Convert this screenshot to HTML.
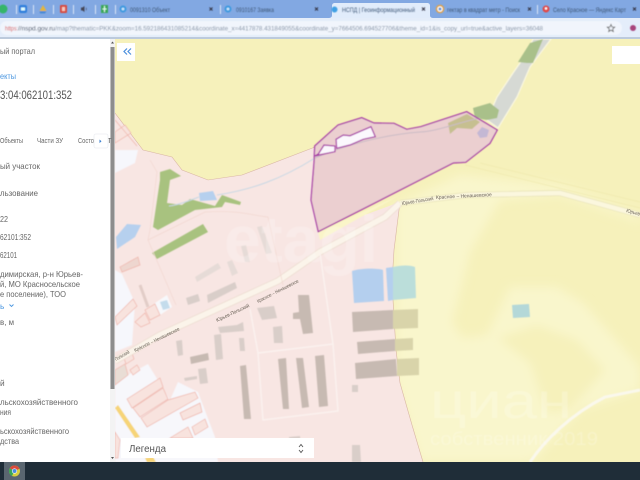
<!DOCTYPE html>
<html><head><meta charset="utf-8"><style>
html,body{margin:0;padding:0;width:640px;height:480px;overflow:hidden;background:#fff}
svg{display:block;position:absolute;left:0;top:0}
text{font-family:"Liberation Sans",sans-serif}
.s{font-size:8.3px;fill:#666}
.p{fill:#f8e3de;stroke:#efb5ab;stroke-width:.7}
.rd{font-size:5px;fill:#6a6258}
.t{font-size:6.5px;fill:#3f5878}
</style></head><body>
<svg width="640" height="480" viewBox="0 0 640 480" xmlns="http://www.w3.org/2000/svg">
<defs>
<filter id="bl" x="-5%" y="-5%" width="110%" height="110%"><feGaussianBlur stdDeviation="0.3"/></filter>
<filter id="bl2" x="-5%" y="-5%" width="110%" height="110%"><feGaussianBlur stdDeviation="0.45"/></filter>
<filter id="bl5" x="-10%" y="-10%" width="120%" height="120%"><feGaussianBlur stdDeviation="5"/></filter>
<clipPath id="mc"><rect x="115" y="39" width="525" height="423"/></clipPath>
</defs>

<!-- MAP -->
<g clip-path="url(#mc)">
<rect x="115" y="39" width="525" height="423" fill="#f6f1bb"/>
<!-- lighter yellow areas -->
<g filter="url(#bl5)" fill="#f9f6cc">
<path d="M396 205L460 175L560 185L640 215L640 222L560 195L500 200L470 252L452 323L463 338L487 335L510 287L557 287L583 303L640 367L640 390L580 410L537 457L530 462L420 462L396 380Z"/>
<path d="M498 338L537 325L577 340L605 370L570 410L547 413L530 363Z" fill="#f6f1bb"/>
</g>
<!-- pink zone -->
<path d="M115 113L143 150L172 157L182 170L208 180L242 175L315 147L312 200L318 232L400 202L394 250L392 283L396 350L400 383L412 425L423 462L115 462Z" fill="#f8e6e3"/>
<path d="M115 113L143 150L172 157L182 170L208 180L242 175L315 147M400 202L394 250L392 283L396 350L400 383L412 425L423 462" fill="none" stroke="#d9b6a4" stroke-width=".6"/>
<g filter="url(#bl2)">
<!-- white gaps -->
<path d="M115 150L138 150L135 163L115 173Z" fill="#f6f7fc"/>
<path d="M115 270L122 274L135 303L132 345L115 352Z" fill="#f6f7fc"/>
<path d="M155 303L167 295L172 307L160 315Z" fill="#f7f8fb"/>
<path d="M115 382L148 364L170 400L178 382L198 392L215 437L218 462L115 462Z" fill="#f7f7fb"/>
<!-- water -->
<path d="M116 237L127 224L141 225L135 237L117 249Z" fill="#b6d0ee"/>
<path d="M199 193L213 191L217 200L200 201Z" fill="#b6d0ee"/>
<path d="M160 302L167 300L170 308L163 310Z" fill="#c4dcec"/>
<path d="M352 271C360 268 378 268 383 270L384 301L354 303Z" fill="#b4cfee"/>
<path d="M386 268L393 267L393 300L388 301Z" fill="#b4cfee"/>
<path d="M393 267C402 265 410 265 415 267L416 298L393 300Z" fill="#bbdeda"/>
<path d="M512 305L529 304L530 317L513 318Z" fill="#b4d8d8"/>
<!-- yellow road -->
<path d="M115 408L118 405L140 437L135 438Z" fill="#f6d477"/>
<path d="M145 458L153 457L156 462L147 462Z" fill="#f6d477"/>
<!-- buildings -->
<g fill="#c7bab2">
<path d="M298 295L309 295L313 333L303 334L300 319L293 319L293 313L299 312Z"/>
<path d="M278 359L286 358L289 409L283 409Z"/>
<path d="M296 358L303 358L309 407L302 408Z"/>
<path d="M315 356L324 355L328 406L319 407Z"/>
<path d="M240 366L246 365L251 419L244 419Z"/>
<path d="M190 357L208 353L209 360L191 364Z"/>
<path d="M352 312L393 310L393 329L353 332Z"/>
<path d="M357 342L395 339L395 351L358 354Z"/>
<path d="M355 363L396 359L397 376L356 379Z"/>
</g>
<g fill="#d9cec9">
<path d="M257 308L274 306L277 318L262 320Z"/>
<path d="M273 327L282 326L283 343L274 343Z"/>
<path d="M214 335L221 334L223 359L216 360Z"/>
<path d="M239 338L244 338L245 351L240 351Z"/>
<path d="M176 341L182 340L183 355L178 356Z"/>
<path d="M198 369L206 368L208 383L200 384Z"/>
<path d="M184 378L197 376L197 379L185 381Z"/>
<path d="M218 327L237 325L243 322L244 331L220 333Z"/>
<path d="M186 298L198 294L200 301L188 305Z"/>
<path d="M207 295L235 282L237 288L208 303Z"/>
<path d="M289 437L300 436L301 447L290 447Z"/>
<path d="M352 445L360 445L361 462L352 462Z"/>
<path d="M352 385L358 385L358 392L352 392Z"/>
</g>
<g fill="#e6dbd7">
<path d="M195 277L218 263L221 268L197 282Z"/>
<path d="M227 262L232 260L238 273L232 276Z"/>
<path d="M257 227L262 226L272 253L266 254Z"/>
<path d="M241 246L246 245L250 262L245 262Z"/>
</g>
<g fill="#d9d4aa">
<path d="M393 310L418 309L418 328L393 329Z"/>
<path d="M395 339L413 338L413 350L395 351Z"/>
<path d="M397 359L419 358L419 375L397 376Z"/>
</g>
<!-- river bed -->
<path d="M533 39L551 39L530 67L517 97L498 128L487 120L497 97L513 73L527 53Z" fill="#d6d9d4" stroke="#faf7e0" stroke-width="1.2"/>
<!-- plots -->
<g class="p">
<path d="M115 132L125 125L131 133L115 143Z"/>
<path d="M115 120L137 146" fill="none"/>
<path d="M120 267L138 257L140 265L122 272Z" fill="#eed6cf"/>
<path d="M115 317L133 299L137 306L117 325Z"/>
<path d="M135 322L145 313L150 323L141 327Z"/>
<path d="M145 310L155 304L160 315L150 320Z"/>
<path d="M127 399L160 378L163 387L132 408Z"/>
<path d="M133 408L163 388L168 399L140 417Z"/>
<path d="M141 418L168 400L195 392L198 398L147 427Z"/>
<path d="M180 413L200 403L202 412L183 420Z"/>
<path d="M192 427L205 419L208 427L195 435Z"/>
<path d="M170 438L188 427L193 438Z"/>
<path d="M115 432L120 440L118 458L115 458Z"/>
<path d="M124 358L132 353L134 359L126 364Z"/>
<path d="M130 370L137 365L140 370L133 375Z"/>
<path d="M115 370L125 364L128 375L115 385Z" fill="#e9ddd5"/>
</g>
<path d="M140 285L148 307" stroke="#d4bdb6" stroke-width="3" fill="none" opacity=".6"/>
<!-- green -->
<path d="M160 172L170 169L181 176L170 180L167 203L182 205L190 199L215 206L222 195L241 202L240 205L225 202L222 207L195 210L158 230L153 227L160 180Z" fill="#a8c27f"/>
<path d="M152 253L203 224L208 232L157 259Z" fill="#a8c27f"/>
<path d="M473 108L490 103L499 110L497 118L487 120L475 118Z" fill="#a9c08a"/>
<path d="M518 62L530 43L543 39L533 63L527 63Z" fill="#a9c08a"/>
<!-- streams -->
<path d="M169 206C180 205 190 200 199 197M217 195C250 190 280 180 315 158" fill="none" stroke="#c8d8e4" stroke-width="1"/>
<!-- road -->
<path d="M115 361L160 335L278 281L320 252L385 217L400 203" fill="none" stroke="#ecdcd0" stroke-width="7"/>
<path d="M115 361L160 335L278 281L320 252L385 217L400 203" fill="none" stroke="#fbf4ea" stroke-width="5.5"/>
<path d="M400 203L467 195L560 193L640 215" fill="none" stroke="#e8e3b8" stroke-width="6"/>
<path d="M400 203L467 195L560 193L640 215" fill="none" stroke="#fbf7de" stroke-width="4.6"/>
<path d="M465 165L640 208M480 163L640 202" fill="none" stroke="#efe9ae" stroke-width=".7"/>
<path d="M318 232L400 195L320 240Z" fill="#faf5c8"/>
<path d="M530 462C545 440 570 415 605 397L640 390" fill="none" stroke="#faf8ec" stroke-width="3"/>
<!-- block lines -->
<g fill="none" stroke="#fbf2ef" stroke-width="1.4">
<path d="M258 353L333 344L338 411L263 420Z"/>
<path d="M250 309L258 353M320 253L333 344"/>
</g>
<g fill="none" stroke="#f2d8d1" stroke-width=".7">
<path d="M150 160L157 172L150 230L148 240L176 305M148 240L205 212C240 210 250 215 268 217L283 285"/>
</g>
<!-- parcel -->
<path d="M314.7 146L338 125L361.7 117.7L374 123L394 123.3L406.7 129.3L420.7 126.7L466.7 111.7L497.3 130L490 143.3L465.7 162.3L453.3 163L318.3 231.7L311 200L314 163.3Z" fill="#ebcfd0"/>
<path d="M448 123L467 114L480 122L472 129L457 128L450 134Z" fill="#c6bf90"/>
<path d="M477 133L482 127L489 130L487 137L480 138Z" fill="#c4b8d4"/>
<path d="M315 158C340 147 380 135 420 132C435 132 460 122 480 118" fill="none" stroke="#cbbcc6" stroke-width="1"/>
<path d="M318.3 154L324 145L335 146L335 151.7Z" fill="#fbf8fd"/>
<path d="M336 139.3L343.3 135L350 135.7L371 126.7L375.3 136.7L363.3 139.3L350 145L336.7 148.3Z" fill="#fbf8fd"/>
<g fill="none" stroke="#a52fa5" stroke-width="1.2">
<path d="M314.7 146L338 125L361.7 117.700L374 123L394 123.3L406.7 129.3L420.7 126.7L466.7 111.7L497.3 130L490 143.3L465.7 162.3L453.3 163L318.3 231.7L311 200L314 163.3Z"/>
<path d="M318.3 154L324 145L335 146L335 151.7L314.7 156Z"/>
<path d="M336 139.3L343.3 135L350 135.7L371 126.7L375.3 136.7L363.3 139.3L350 145L336.7 148.3Z"/>
</g>
<!-- watermarks -->
<text x="224" y="262" font-size="66" font-weight="bold" fill="#fff" opacity=".2">etagi</text>
<g fill="#fff" opacity=".2">
<text x="430" y="418" font-size="50" textLength="142" lengthAdjust="spacingAndGlyphs">циан</text>
<text x="430" y="445" font-size="18" textLength="168" lengthAdjust="spacingAndGlyphs">собственник 2019</text>
</g>
</g>
<!-- road labels -->
<g class="rd" filter="url(#bl)">
<text transform="translate(402,205) rotate(-9)" textLength="32" lengthAdjust="spacingAndGlyphs">Юрьев-Польский</text>
<text transform="translate(436,199) rotate(-3)" textLength="56" lengthAdjust="spacingAndGlyphs">Красное – Ненашевское</text>
<text transform="translate(626,212) rotate(15)" textLength="14" lengthAdjust="spacingAndGlyphs">Юрьев</text>
<text transform="translate(217,322) rotate(-25)" textLength="36" lengthAdjust="spacingAndGlyphs">Юрьев-Польский</text>
<text transform="translate(258,303) rotate(-27)" textLength="46" lengthAdjust="spacingAndGlyphs">Красное – Ненашевское</text>
<text transform="translate(116,361) rotate(-30)" textLength="16" lengthAdjust="spacingAndGlyphs">Польский</text>
<text transform="translate(135,352) rotate(-26)" textLength="50" lengthAdjust="spacingAndGlyphs">Красное – Ненашевское</text>
</g>
</g>

<!-- SIDEBAR -->
<rect x="0" y="39" width="115" height="423" fill="#fff"/>
<rect x="110" y="39" width="5" height="423" fill="#f3f3f3"/>
<rect x="110.500" y="47" width="4" height="342" fill="#8d8d8d"/>
<path d="M112.500 41.500l-1.500 2h3zM112.500 459l-1.500-2h3z" fill="#555"/>
<g filter="url(#bl)">
<text class="s" x="0" y="54" textLength="35" lengthAdjust="spacingAndGlyphs">ый портал</text>
<text x="0" y="79" font-size="8.300" fill="#4a96e0" textLength="16" lengthAdjust="spacingAndGlyphs">екты</text>
<text x="0" y="99" font-size="12" fill="#555" textLength="72" lengthAdjust="spacingAndGlyphs">3:04:062101:352</text>
<text class="s" x="0" y="143" style="font-size:7.500px" textLength="23" lengthAdjust="spacingAndGlyphs">Объекты</text>
<text class="s" x="37" y="143" style="font-size:7.500px" textLength="26" lengthAdjust="spacingAndGlyphs">Части ЗУ</text>
<text class="s" x="78" y="143" style="font-size:7.500px" textLength="16" lengthAdjust="spacingAndGlyphs">Состо</text>
<text class="s" x="107" y="143" style="font-size:7.500px">Т</text>
<text class="s" x="0" y="169" textLength="40" lengthAdjust="spacingAndGlyphs">ый участок</text>
<text class="s" x="0" y="196" textLength="38" lengthAdjust="spacingAndGlyphs">льзование</text>
<text class="s" x="0" y="222" textLength="8" lengthAdjust="spacingAndGlyphs">22</text>
<text class="s" x="0" y="240" textLength="31" lengthAdjust="spacingAndGlyphs">62101:352</text>
<text class="s" x="0" y="258" textLength="17" lengthAdjust="spacingAndGlyphs">62101</text>
<text class="s" x="0" y="277" textLength="83" lengthAdjust="spacingAndGlyphs">димирская, р-н Юрьев-</text>
<text class="s" x="0" y="287" textLength="80" lengthAdjust="spacingAndGlyphs">й, МО Красносельское</text>
<text class="s" x="0" y="297" textLength="66" lengthAdjust="spacingAndGlyphs">е поселение), ТОО</text>
<text x="0" y="309" font-size="8.300" fill="#4a96e0">ь</text>
<path d="M9.500 304.500l2 2 2-2" fill="none" stroke="#4a96e0" stroke-width=".9"/>
<text class="s" x="0" y="325" textLength="14" lengthAdjust="spacingAndGlyphs">в, м</text>
<text class="s" x="0" y="386">й</text>
<text class="s" x="0" y="405" textLength="78" lengthAdjust="spacingAndGlyphs">льскохозяйственного</text>
<text class="s" x="0" y="415" textLength="11" lengthAdjust="spacingAndGlyphs">ния</text>
<text class="s" x="0" y="434" textLength="69" lengthAdjust="spacingAndGlyphs">ьскохозяйственного</text>
<text class="s" x="0" y="444" textLength="19" lengthAdjust="spacingAndGlyphs">дства</text>
</g>
<rect x="94" y="134" width="14" height="14" rx="2" fill="#fff" stroke="#eceef2" stroke-width=".8"/>
<path d="M99.500 139.500l2 1.800-2 1.800z" fill="#3a7fd0"/>

<!-- buttons on map -->
<rect x="117" y="43" width="18" height="18" fill="#fff"/>
<path d="M127 48.500l-3 3 3 3M131 48.500l-3 3 3 3" fill="none" stroke="#4a8edc" stroke-width="1.200"/>
<rect x="612" y="46" width="28" height="18" fill="#fff"/>
<rect x="121" y="438" width="193" height="20" fill="#fff"/>
<text x="129" y="452" font-size="10" fill="#555" textLength="37" lengthAdjust="spacingAndGlyphs" filter="url(#bl)">Легенда</text>
<path d="M299 447l2-2.500 2 2.500M299 450l2 2.500 2-2.500" fill="none" stroke="#555" stroke-width=".9"/>

<!-- CHROME -->
<rect x="0" y="0" width="640" height="18" fill="#82a8e2"/>
<path d="M328 18c3 0 4-1 4-3V6c0-2 1-3 3-3h92c2 0 3 1 3 3v9c0 2 1 3 4 3z" fill="#e1ecfb"/>
<rect x="0" y="18" width="640" height="19" fill="#e4edfa"/>
<rect x="0" y="37" width="640" height="2" fill="#bccadc"/>
<g filter="url(#bl2)">
<circle cx="3" cy="9" r="4.500" fill="#35b56a"/>
<rect x="16" y="5" width="1" height="9" fill="#dbe6f6"/>
<rect x="19" y="5" width="8" height="8" rx="2" fill="#2e7fdc"/>
<rect x="21" y="7.500" width="4" height="3" fill="#dff"/>
<rect x="33" y="5" width="1" height="9" fill="#dbe6f6"/>
<path d="M43 5l3.500 6h-7z" fill="#e4b53d"/><path d="M39.500 11h7l-1.500 2.500h-5z" fill="#4a8bd8"/>
<rect x="53" y="5" width="1" height="9" fill="#dbe6f6"/>
<rect x="60" y="5" width="7" height="8" rx="1" fill="#d84a3e"/>
<rect x="62" y="7" width="3" height="4" fill="#f4c8c0"/>
<rect x="73" y="5" width="1" height="9" fill="#dbe6f6"/>
<path d="M81 7.500h1.500l2-1.500v6l-2-1.500H81zM86 7l.7 2-.7 2" fill="#445"/>
<rect x="95" y="5" width="1" height="9" fill="#dbe6f6"/>
<rect x="101" y="5" width="7" height="8" fill="#3aa858"/>
<path d="M104.500 6v6M102.500 9h4" stroke="#dfe" stroke-width="1"/>
<rect x="115" y="5" width="1" height="9" fill="#dbe6f6"/>
<circle cx="123" cy="9" r="3.500" fill="#3c9ae0"/><circle cx="123" cy="9" r="1.400" fill="#cfe8fa"/>
<text class="t" x="130" y="12" textLength="40" lengthAdjust="spacingAndGlyphs">0091310 Объект</text>
<path d="M209.500 7.500l3 3m0-3l-3 3" stroke="#334" stroke-width="1"/>
<rect x="220" y="5" width="1" height="9" fill="#dbe6f6"/>
<circle cx="228" cy="9" r="3.500" fill="#3c9ae0"/><circle cx="228" cy="9" r="1.400" fill="#cfe8fa"/>
<text class="t" x="236" y="12" textLength="38" lengthAdjust="spacingAndGlyphs">0910167 Заявка</text>
<path d="M315 7.500l3 3m0-3l-3 3" stroke="#334" stroke-width="1"/>
<circle cx="334.500" cy="9.500" r="3" fill="#3fa0e4"/>
<text class="t" x="342" y="12" textLength="73" lengthAdjust="spacingAndGlyphs">НСПД | Геоинформационный</text>
<path d="M422 7.500l3 3m0-3l-3 3" stroke="#334" stroke-width="1"/>
<circle cx="440" cy="9" r="3.500" fill="#fff" stroke="#e0a040" stroke-width="1.500"/>
<circle cx="440" cy="9" r="1.500" fill="#5a90d8"/>
<text class="t" x="447" y="12" textLength="73" lengthAdjust="spacingAndGlyphs">гектар в квадрат метр - Поиск</text>
<path d="M528 7.500l3 3m0-3l-3 3" stroke="#334" stroke-width="1"/>
<rect x="537" y="5" width="1" height="9" fill="#dbe6f6"/>
<circle cx="546" cy="9" r="3.500" fill="#e04848"/><circle cx="546" cy="8.500" r="1.200" fill="#fff"/>
<text class="t" x="553" y="12" textLength="73" lengthAdjust="spacingAndGlyphs">Село Красное — Яндекс Карт</text>
<path d="M633 7.500l3 3m0-3l-3 3" stroke="#334" stroke-width="1"/>

<rect x="0" y="21" width="622" height="14" rx="7" fill="#f1f5fc"/>
<text x="5" y="30.500" font-size="6.500" fill="#d85a5a" textLength="13" lengthAdjust="spacingAndGlyphs">https:</text>
<text x="18" y="30.500" font-size="6.500" fill="#3c4a60" textLength="37" lengthAdjust="spacingAndGlyphs">//nspd.gov.ru</text>
<text x="55" y="30.500" font-size="6.500" fill="#8090a4" textLength="488" lengthAdjust="spacingAndGlyphs">/map?thematic=PKK&amp;zoom=16.592186431085214&amp;coordinate_x=4417878.431849055&amp;coordinate_y=7664506.694527706&amp;theme_id=1&amp;is_copy_url=true&amp;active_layers=36048</text>
<path d="M611 24.500l1.100 2.500 2.600.2-2 1.700.6 2.600-2.300-1.400-2.300 1.400.6-2.600-2-1.700 2.600-.2z" fill="none" stroke="#555" stroke-width=".8"/>
<circle cx="633" cy="28" r="3" fill="#a8447c"/>
</g>

<!-- TASKBAR -->
<rect x="0" y="462" width="640" height="18" fill="#1f2d38"/>
<rect x="4" y="462" width="21" height="18" fill="#5a6670"/>
<g filter="url(#bl)">
<circle cx="14.500" cy="471" r="5.500" fill="#d8d040"/>
<path d="M14.500 471L9.700 468.300A5.500 5.500 0 0 1 19.500 468.700Z" fill="#dc4b3e"/>
<path d="M14.500 471L12 476A5.500 5.500 0 0 1 9.700 468.300Z" fill="#3aa858"/>
<circle cx="14.500" cy="471" r="2.600" fill="#fff"/>
<circle cx="14.500" cy="471" r="2" fill="#4a8de0"/>
</g>
</svg>
</body></html>
